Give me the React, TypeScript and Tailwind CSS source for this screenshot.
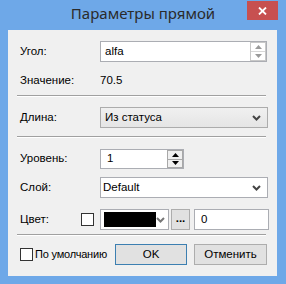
import React from 'react';

const Tri: React.FC<{ up?: boolean; color: string }> = ({ up, color }) => (
  <svg width="7" height="4" viewBox="0 0 7 4">
    <polygon points={up ? '3.5,0 7,4 0,4' : '0,0 7,0 3.5,4'} fill={color} />
  </svg>
);

const Chevron: React.FC<{ color?: string }> = ({ color = '#444' }) => (
  <svg width="9" height="6" viewBox="0 0 9 6">
    <polyline points="1,1 4.5,4.5 8,1" fill="none" stroke={color} strokeWidth="2" />
  </svg>
);

const Separator = ({ mt }: { mt: string }) => (
  <div className={`${mt} ml-[9px] mr-[11px] border-t border-t-[#a0a0a0] border-b border-b-white`} />
);

const Label = ({ children }: { children: React.ReactNode }) => (
  <div className="w-[92px] shrink-0 pl-[12px]">{children}</div>
);

const App: React.FC = () => {
  return (
    <div className="w-[286px] h-[284px] bg-[#6ea8e8] flex flex-col font-['Liberation_Sans',sans-serif] text-[11.5px] text-black">
      {/* title bar */}
      <div className="relative h-[30px] shrink-0 flex items-center justify-center">
        <span className="font-['Noto_Sans',sans-serif] text-[15px] text-[#2b2b2b] -mt-[3px]">Параметры прямой</span>
        <div className="absolute right-[8px] top-[1px] w-[31px] h-[19px] bg-[#c75050] flex items-center justify-center">
          <svg width="9" height="8" viewBox="0 0 9 8">
            <path d="M1,0.5 L8,7.5 M8,0.5 L1,7.5" stroke="white" strokeWidth="1.8" />
          </svg>
        </div>
      </div>

      {/* client */}
      <div className="ml-[8px] w-[269px] h-[246px] bg-[#f0f0f0] flex flex-col">
        {/* Угол */}
        <div className="mt-[11px] flex items-center h-[21px]">
          <Label>Угол:</Label>
          <div className="w-[167px] h-full bg-white border border-[#abadb3] flex items-center">
            <span className="flex-1 pl-[4px]">alfa</span>
            <div className="w-[16px] h-[19px] border border-[#c8c8c8] flex flex-col">
              <div className="flex-1 flex items-center justify-center border-b border-[#d8d8d8]">
                <Tri up color="#9a9a9a" />
              </div>
              <div className="flex-1 flex items-center justify-center">
                <Tri color="#9a9a9a" />
              </div>
            </div>
          </div>
        </div>

        {/* Значение */}
        <div className="mt-[8px] flex items-center h-[21px]">
          <Label>Значение:</Label>
          <span>70.5</span>
        </div>

        <Separator mt="mt-[4px]" />

        {/* Длина */}
        <div className="mt-[10px] flex items-center h-[21px]">
          <Label>Длина:</Label>
          <div className="w-[168px] h-full border border-[#acacac] bg-gradient-to-b from-[#f0f0f0] to-[#e5e5e5] flex items-center pl-[4px] pr-[6px]">
            <span className="flex-1">Из статуса</span>
            <Chevron />
          </div>
        </div>

        <Separator mt="mt-[8px]" />

        {/* Уровень */}
        <div className="mt-[11px] flex items-center h-[20px]">
          <Label>Уровень:</Label>
          <div className="w-[84px] h-full bg-white border border-[#abadb3] flex items-center">
            <span className="flex-1 pl-[6px]">1</span>
            <div className="w-[16px] h-[18px] border border-[#a8a8a8] flex flex-col bg-[#f0f0f0]">
              <div className="flex-1 flex items-center justify-center border-b border-[#a8a8a8]">
                <Tri up color="#000" />
              </div>
              <div className="flex-1 flex items-center justify-center">
                <Tri color="#000" />
              </div>
            </div>
          </div>
        </div>

        {/* Слой */}
        <div className="mt-[8px] flex items-center h-[21px]">
          <Label>Слой:</Label>
          <div className="w-[168px] h-full bg-white border border-[#abadb3] flex items-center pl-[2px] pr-[6px]">
            <span className="flex-1">Default</span>
            <Chevron />
          </div>
        </div>

        {/* Цвет */}
        <div className="mt-[11px] flex items-center h-[21px]">
          <div className="w-[73px] shrink-0 pl-[12px]">Цвет:</div>
          <div className="w-[13px] h-[13px] bg-white border border-[#333]" />
          <div className="w-[6px]" />
          <div className="w-[69px] h-full bg-white border border-[#abadb3] flex items-center pl-[3px] pr-[3px]">
            <div className="w-[52px] h-[15px] bg-black" />
            <div className="flex-1 flex justify-center">
              <Chevron color="#777" />
            </div>
          </div>
          <div className="ml-[2px] w-[19px] h-full bg-[#e1e1e1] border border-[#adadad] flex items-center justify-center font-bold leading-none pb-[2px]">...</div>
          <div className="ml-[4px] w-[75px] h-full bg-white border border-[#abadb3] flex items-center pl-[6px]">0</div>
        </div>

        <Separator mt="mt-[4px]" />

        {/* bottom */}
        <div className="mt-[8px] flex items-center h-[21px]">
          <div className="ml-[12px] w-[13px] h-[13px] shrink-0 bg-white border border-[#333]" />
          <span className="ml-[2px] whitespace-nowrap text-[11px] tracking-[-0.2px]">По умолчанию</span>
          <div className="ml-auto w-[72px] h-full bg-[#e1e1e1] border border-[#3c7fb1] flex items-center justify-center">OK</div>
          <div className="ml-[7px] mr-[10px] w-[73px] h-full bg-[#e1e1e1] border border-[#adadad] flex items-center justify-center whitespace-nowrap">Отменить</div>
        </div>
      </div>
    </div>
  );
};

export default App;
